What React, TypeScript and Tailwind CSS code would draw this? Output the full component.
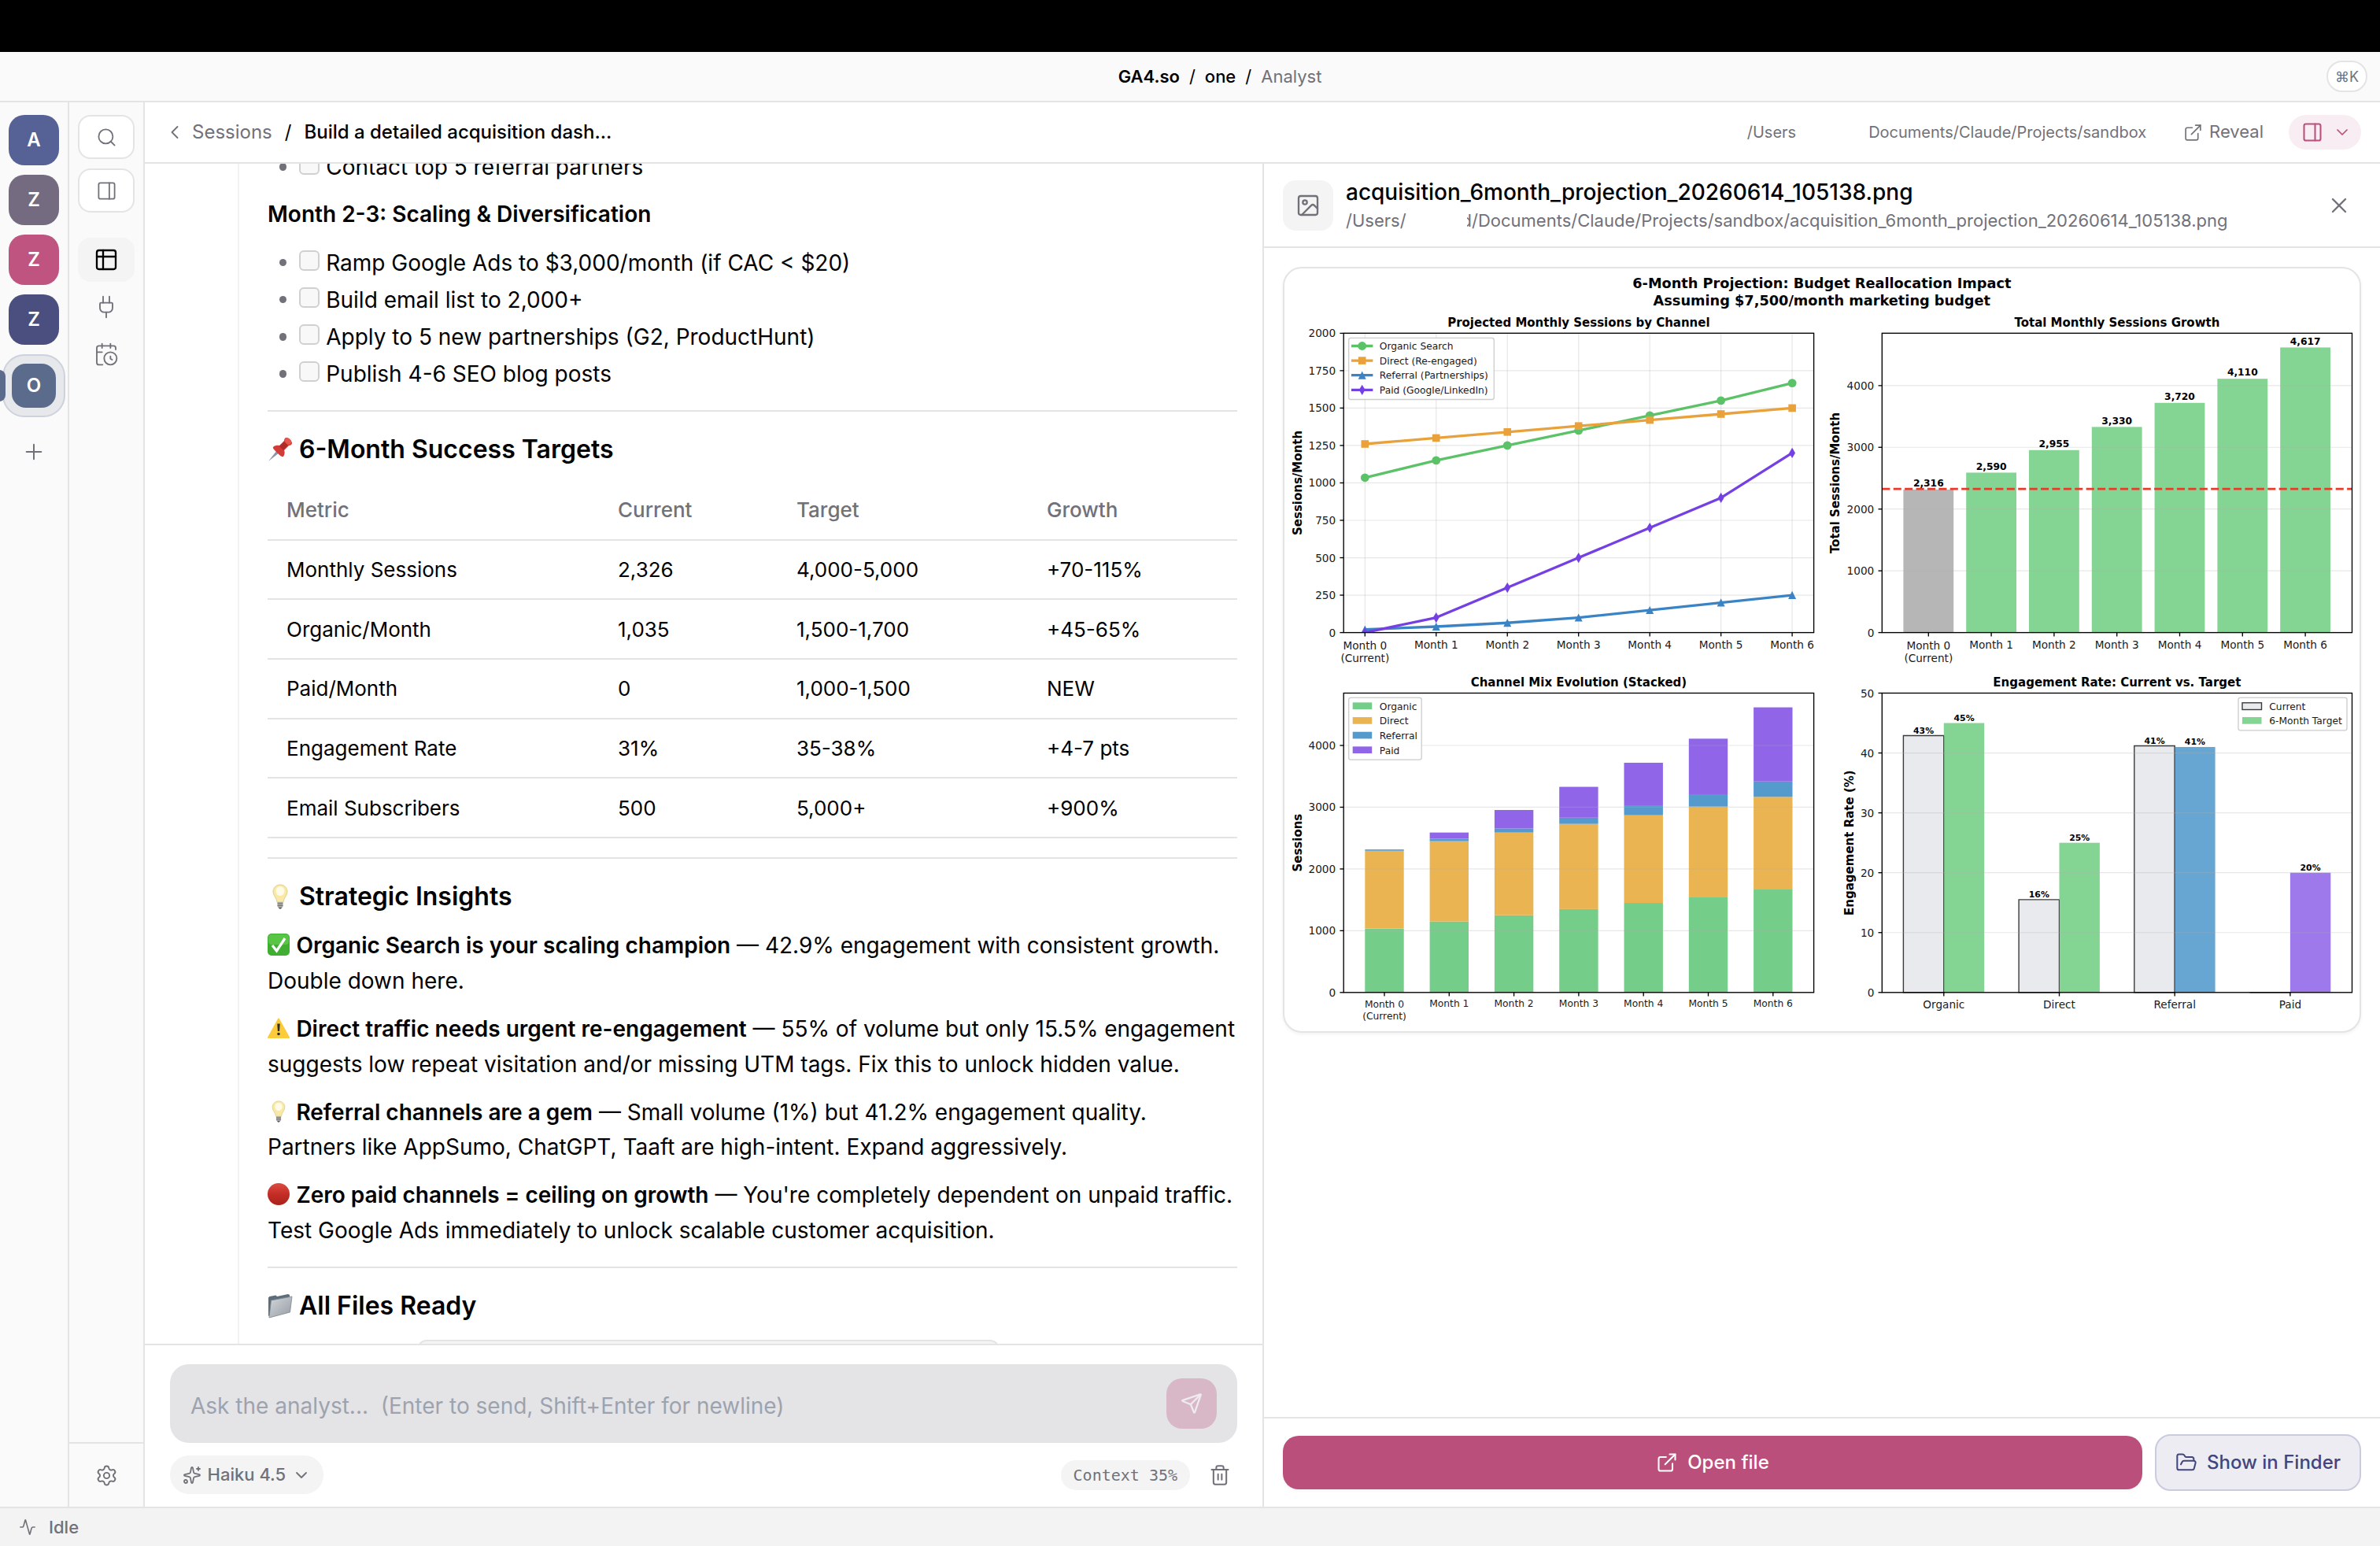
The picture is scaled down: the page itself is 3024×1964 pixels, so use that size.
import {
  Activity,
  CalendarClock,
  ChevronDown,
  ChevronLeft,
  ExternalLink,
  FolderOpen,
  Image as ImageIcon,
  PanelRight,
  Plug,
  Plus,
  Search,
  Send,
  Settings,
  Sparkles,
  Trash2,
  X,
} from 'lucide-react';
import type { ReactNode } from 'react';

const workspaces = [
  { letter: 'A', color: 'bg-[#566296]' },
  { letter: 'Z', color: 'bg-[#746b80]' },
  { letter: 'Z', color: 'bg-[#c05480]' },
  { letter: 'Z', color: 'bg-[#4a4f80]' },
];

const tasks = [
  'Ramp Google Ads to $3,000/month (if CAC < $20)',
  'Build email list to 2,000+',
  'Apply to 5 new partnerships (G2, ProductHunt)',
  'Publish 4-6 SEO blog posts',
];

const targets = [
  ['Monthly Sessions', '2,326', '4,000-5,000', '+70-115%'],
  ['Organic/Month', '1,035', '1,500-1,700', '+45-65%'],
  ['Paid/Month', '0', '1,000-1,500', 'NEW'],
  ['Engagement Rate', '31%', '35-38%', '+4-7 pts'],
  ['Email Subscribers', '500', '5,000+', '+900%'],
];

// ---------- emoji ----------

function PinEmoji() {
  return (
    <svg viewBox="0 0 32 32" className="size-4 shrink-0">
      <path d="M1 31 12 17l3 3z" fill="#8a97a8" />
      <path d="M7 13c3-3 7-2 8-2l6-6c0-2 1-4 3-4 3 0 7 4 7 7 0 2-2 3-4 3l-6 6c1 2 1 5-1 8-1 1-3 0-7-4s-7-7-6-8z" fill="#d23c36" />
      <path d="M15 12l6-6 5 5-6 6z" fill="#b02a28" />
      <ellipse cx="26" cy="5.500" rx="4.500" ry="3.500" transform="rotate(45 26 5.500)" fill="#e8554c" />
    </svg>
  );
}

function BulbEmoji({ className }: { className: string }) {
  return (
    <svg viewBox="0 0 32 32" className={className}>
      <path d="M16 1c-5.500 0-9 4-9 8.800 0 5 4.600 7.600 5 13.200h8c.4-5.600 5-8.200 5-13.200C25 5 21.500 1 16 1z" fill="#f8e9a6" stroke="#e3cf86" />
      <ellipse cx="16" cy="9" rx="5.500" ry="6" fill="#fffbe6" />
      <path d="M12.500 23h7v5c0 1.500-1.500 3-3.500 3s-3.500-1.500-3.500-3z" fill="#a9a9a9" />
      <path d="M12.500 25h7M12.500 27.500h7" stroke="#77756f" />
      <path d="M14 30h4l-1 1.500h-2z" fill="#444" />
    </svg>
  );
}

function CheckEmoji() {
  return (
    <svg viewBox="0 0 28 28" className="mr-[4.2px] inline-block size-3.5 align-[-1.5px]">
      <rect width="28" height="28" rx="5" fill="#3fae32" />
      <rect x="1" y="1" width="26" height="13" rx="4" fill="#58c544" />
      <path d="m6 15 5.500 7L22 6" fill="none" stroke="#fff" strokeWidth="3.200" />
    </svg>
  );
}

function WarningEmoji() {
  return (
    <svg viewBox="0 0 28 28" className="mr-[4.2px] inline-block size-3.5 align-[-1.5px]">
      <path d="M14 2.500 27 26H1z" fill="#fccb3a" stroke="#fccb3a" strokeWidth="2" strokeLinejoin="round" />
      <path d="M12.300 8.500h3.400l-.6 9.500h-2.200z" fill="#2c2c2c" />
      <circle cx="14" cy="21.500" r="1.800" fill="#2c2c2c" />
    </svg>
  );
}

function RedCircleEmoji() {
  return (
    <svg viewBox="0 0 28 28" className="mr-[4.2px] inline-block size-3.5 align-[-1.5px]">
      <defs>
        <linearGradient id="red" x1="0" y1="0" x2="0" y2="1">
          <stop offset="0" stopColor="#dc4c43" />
          <stop offset="0.500" stopColor="#c42d25" />
          <stop offset="1" stopColor="#a8221c" />
        </linearGradient>
      </defs>
      <circle cx="14" cy="14" r="14" fill="url(#red)" />
    </svg>
  );
}

function FolderEmoji() {
  return (
    <svg viewBox="0 0 32 32" className="size-4 shrink-0">
      <defs>
        <linearGradient id="folder" x1="0" y1="0" x2="1" y2="1">
          <stop offset="0" stopColor="#d3d7dc" />
          <stop offset="1" stopColor="#969ca3" />
        </linearGradient>
      </defs>
      <path d="M1 5.500 2.500 4l8-1.500 1.500 1.500 14-3 2 1v3L3 28l-2 1z" fill="#5d6d7a" />
      <path d="M4.500 9 31 4l-2.500 20L2 31z" fill="url(#folder)" stroke="#7c858e" strokeWidth=".8" />
    </svg>
  );
}

// ---------- charts ----------

// one typographic point of the figure in drawing units
const PT = 1.364;
const MONTHS = [0, 1, 2, 3, 4, 5, 6];

const series = {
  organic: [1035, 1150, 1250, 1350, 1450, 1550, 1667],
  direct: [1260, 1300, 1340, 1380, 1420, 1460, 1500],
  referral: [21, 40, 65, 100, 150, 200, 250],
  paid: [0, 100, 300, 500, 700, 900, 1200],
};

type TextProps = {
  x: number;
  y: number;
  size: number;
  bold?: boolean;
  anchor?: 'start' | 'middle' | 'end';
  vertical?: boolean;
  children: ReactNode;
};

function Label({ x, y, size, bold, anchor = 'middle', vertical, children }: TextProps) {
  return (
    <text
      x={x}
      y={y}
      fontSize={size * PT}
      fontWeight={bold ? 700 : 400}
      textAnchor={anchor}
      fill={bold ? '#000' : '#1a1a1a'}
      transform={vertical ? `rotate(-90 ${x} ${y})` : undefined}
    >
      {children}
    </text>
  );
}

type FrameProps = {
  left: number;
  right: number;
  top: number;
  max: number;
  ticks: number[];
  title: string;
  yLabel: string;
  yLabelX: number;
};

const HEIGHT = 380.3;

function yOf(top: number, max: number, v: number) {
  return top + HEIGHT - (v / max) * HEIGHT;
}

function Grid({ left, right, top, max, ticks }: Pick<FrameProps, 'left' | 'right' | 'top' | 'max' | 'ticks'>) {
  return (
    <>
      {ticks.map((t) => (
        <line key={t} x1={left} x2={right} y1={yOf(top, max, t)} y2={yOf(top, max, t)} stroke="#b0b0b0" strokeOpacity={0.3} strokeWidth={1.2} />
      ))}
    </>
  );
}

function Frame({ left, right, top, max, ticks, title, yLabel, yLabelX }: FrameProps) {
  return (
    <>
      <rect x={left} y={top} width={right - left} height={HEIGHT} fill="none" stroke="#000" strokeWidth={1.35} />
      {ticks.map((t) => {
        const y = yOf(top, max, t);
        return (
          <g key={t}>
            <line x1={left - 4.8} x2={left} y1={y} y2={y} stroke="#000" strokeWidth={1.35} />
            <Label x={left - 10} y={y + 5} size={10} anchor="end">
              {t}
            </Label>
          </g>
        );
      })}
      <Label x={(left + right) / 2} y={top - 8.4} size={11} bold>
        {title}
      </Label>
      <Label x={yLabelX} y={top + HEIGHT / 2} size={11} bold vertical>
        {yLabel}
      </Label>
    </>
  );
}

function MonthAxis({ first, step, y, size }: { first: number; step: number; y: number; size: number }) {
  return (
    <>
      {MONTHS.map((m) => {
        const x = first + m * step;
        return (
          <g key={m}>
            <line x1={x} x2={x} y1={y} y2={y + 4.8} stroke="#000" strokeWidth={1.35} />
            <Label x={x} y={y + (m ? size * 2 : size * 2 + 1.3)} size={size}>
              Month {m}
            </Label>
            {m === 0 && (
              <Label x={x} y={y + (size === 10 ? 37.8 : 34.6)} size={size}>
                (Current)
              </Label>
            )}
          </g>
        );
      })}
    </>
  );
}

function Marker({ kind, x, y, color }: { kind: string; x: number; y: number; color: string }) {
  if (kind === 'circle') return <circle cx={x} cy={y} r={5.4} fill={color} />;
  if (kind === 'square') return <rect x={x - 4.8} y={y - 4.8} width={9.6} height={9.6} fill={color} />;
  if (kind === 'triangle') return <path d={`M${x} ${y - 5.2}l5 10.200h-10z`} fill={color} />;
  return <path d={`M${x} ${y - 6.6}l3.900 6.600-3.900 6.600-3.900-6.600z`} fill={color} />;
}

const lines = [
  { name: 'Organic Search', values: series.organic, color: '#5bc267', kind: 'circle' },
  { name: 'Direct (Re-engaged)', values: series.direct, color: '#e9a23b', kind: 'square' },
  { name: 'Referral (Partnerships)', values: series.referral, color: '#3a84c5', kind: 'triangle' },
  { name: 'Paid (Google/LinkedIn)', values: series.paid, color: '#7540e3', kind: 'diamond' },
];

function SessionsByChannel() {
  const left = 75.2;
  const right = 672.6;
  const top = 82.3;
  const ticks = [0, 250, 500, 750, 1000, 1250, 1500, 1750, 2000];
  const xOf = (m: number) => 102.3 + m * 90.47;
  return (
    <g>
      <Grid left={left} right={right} top={top} max={2000} ticks={ticks} />
      {MONTHS.map((m) => (
        <line key={m} x1={xOf(m)} x2={xOf(m)} y1={top} y2={top + HEIGHT} stroke="#b0b0b0" strokeOpacity={0.3} strokeWidth={1.2} />
      ))}
      <clipPath id="plot">
        <rect x={left} y={top} width={right - left} height={HEIGHT} />
      </clipPath>
      <g clipPath="url(#plot)">
        {lines.map((l) => (
          <g key={l.name}>
            <polyline
              points={l.values.map((v, m) => `${xOf(m)},${yOf(top, 2000, v)}`).join(' ')}
              fill="none"
              stroke={l.color}
              strokeWidth={3.3}
              strokeLinejoin="round"
            />
            {l.values.map((v, m) => (
              <Marker key={m} kind={l.kind} x={xOf(m)} y={yOf(top, 2000, v)} color={l.color} />
            ))}
          </g>
        ))}
      </g>
      <Frame left={left} right={right} top={top} max={2000} ticks={ticks} title="Projected Monthly Sessions by Channel" yLabel="Sessions/Month" yLabelX={22} />
      <MonthAxis first={102.3} step={90.47} y={462.6} size={10} />
      <rect x={81.7} y={88.4} width={184.6} height={78.1} rx={2.5} fill="#fff" fillOpacity={0.8} stroke="#ccc" strokeWidth={1.3} />
      {lines.map((l, i) => {
        const y = 98.5 + i * 18.6;
        return (
          <g key={l.name}>
            <line x1={85} x2={112.4} y1={y} y2={y} stroke={l.color} strokeWidth={3.3} />
            <Marker kind={l.kind} x={98.7} y={y} color={l.color} />
            <Label x={120.8} y={y + 4.7} size={9} anchor="start">
              {l.name}
            </Label>
          </g>
        );
      })}
    </g>
  );
}

const totals = [2316, 2590, 2955, 3330, 3720, 4110, 4617];

function TotalGrowth() {
  const left = 759.3;
  const right = 1356.5;
  const top = 82.3;
  const max = 4847.85;
  const ticks = [0, 1000, 2000, 3000, 4000];
  const xOf = (m: number) => 818.3 + m * 79.8;
  return (
    <g>
      {totals.map((v, m) => (
        <rect key={m} x={xOf(m) - 31.9} y={yOf(top, max, v)} width={63.8} height={462.6 - yOf(top, max, v)} fill={m ? '#84d494' : '#b6b6b6'} />
      ))}
      <Grid left={left} right={right} top={top} max={max} ticks={ticks} />
      <line x1={left} x2={right} y1={yOf(top, max, 2326)} y2={yOf(top, max, 2326)} stroke="#ea3829" strokeWidth={2.7} strokeDasharray="10.06 4.350" />
      <Frame left={left} right={right} top={top} max={max} ticks={ticks} title="Total Monthly Sessions Growth" yLabel="Total Sessions/Month" yLabelX={705.5} />
      {totals.map((v, m) => (
        <Label key={m} x={xOf(m)} y={yOf(top, max, v) - 3.8} size={9} bold>
          {v.toLocaleString('en-US')}
        </Label>
      ))}
      <MonthAxis first={818.3} step={79.8} y={462.6} size={10} />
    </g>
  );
}

const stack = [
  { name: 'Organic', values: series.organic, color: '#74cd88' },
  { name: 'Direct', values: series.direct, color: '#ebb452' },
  { name: 'Referral', values: series.referral, color: '#549acd' },
  { name: 'Paid', values: series.paid, color: '#9065e8' },
];

function ChannelMix() {
  const left = 75.2;
  const right = 672.6;
  const top = 539.5;
  const max = 4847.85;
  const ticks = [0, 1000, 2000, 3000, 4000];
  const first = 127;
  const step = 82.3;
  return (
    <g>
      {MONTHS.map((m) => {
        let base = 0;
        return stack.map((s) => {
          const from = base;
          base += s.values[m];
          return (
            <rect
              key={s.name + m}
              x={first + m * step - 24.7}
              y={yOf(top, max, base)}
              width={49.4}
              height={yOf(top, max, from) - yOf(top, max, base)}
              fill={s.color}
            />
          );
        });
      })}
      <Grid left={left} right={right} top={top} max={max} ticks={ticks} />
      <Frame left={left} right={right} top={top} max={max} ticks={ticks} title="Channel Mix Evolution (Stacked)" yLabel="Sessions" yLabelX={22} />
      <MonthAxis first={first} step={step} y={919.8} size={9} />
      <rect x={81.7} y={545.3} width={92.5} height={78.8} rx={2.5} fill="#fff" fillOpacity={0.8} stroke="#ccc" strokeWidth={1.3} />
      {stack.map((s, i) => (
        <g key={s.name}>
          <rect x={86.7} y={551.4 + i * 18.65} width={24.5} height={8.7} fill={s.color} />
          <Label x={120.8} y={560.6 + i * 18.65} size={9} anchor="start">
            {s.name}
          </Label>
        </g>
      ))}
    </g>
  );
}

const engagement = [
  { name: 'Organic', current: 42.9, target: 45, color: '#84d494' },
  { name: 'Direct', current: 15.5, target: 25, color: '#84d494' },
  { name: 'Referral', current: 41.2, target: 41, color: '#67a6d3' },
  { name: 'Paid', current: 0, target: 20, color: '#9e79eb' },
];

function EngagementRate() {
  const left = 759.3;
  const right = 1356.5;
  const top = 539.5;
  const bottom = 919.8;
  const ticks = [0, 10, 20, 30, 40, 50];
  const w = 51.4;
  return (
    <g>
      {engagement.map((e, i) => {
        const x = 837.8 + i * 146.7;
        const yc = yOf(top, 50, e.current);
        const yt = yOf(top, 50, e.target);
        return (
          <g key={e.name}>
            <path d={`M${x - w} ${bottom}V${yc}H${x}V${bottom}z`} fill="#e8eaed" stroke="#3a3a3c" strokeWidth={1.4} />
            <rect x={x} y={yt} width={w} height={bottom - yt} fill={e.color} />
            {e.current > 0 && <line x1={x} x2={x} y1={Math.max(yc, yt)} y2={bottom} stroke="#3a3a3c" strokeOpacity={0.7} />}
          </g>
        );
      })}
      <Grid left={left} right={right} top={top} max={50} ticks={ticks} />
      <Frame left={left} right={right} top={top} max={50} ticks={ticks} title="Engagement Rate: Current vs. Target" yLabel="Engagement Rate (%)" yLabelX={723} />
      {engagement.map((e, i) => {
        const x = 837.8 + i * 146.7;
        return (
          <g key={e.name}>
            <line x1={x} x2={x} y1={bottom} y2={bottom + 4.8} stroke="#000" strokeWidth={1.35} />
            <Label x={x} y={bottom + 20.4} size={10}>
              {e.name}
            </Label>
            {e.current > 0 && (
              <Label x={x - w / 2} y={yOf(top, 50, e.current) - 2.6} size={8} bold>
                {Math.round(e.current)}%
              </Label>
            )}
            <Label x={x + w / 2} y={yOf(top, 50, e.target) - 2.6} size={8} bold>
              {e.target}%
            </Label>
          </g>
        );
      })}
      <rect x={1212} y={545.3} width={138} height={41.5} rx={2.5} fill="#fff" fillOpacity={0.8} stroke="#ccc" strokeWidth={1.3} />
      <rect x={1217} y={551.8} width={24.5} height={8.7} fill="#e8eaed" stroke="#3a3a3c" strokeWidth={1.4} />
      <rect x={1217} y={570} width={24.5} height={8.7} fill="#84d494" />
      <Label x={1251.3} y={560.6} size={9} anchor="start">
        Current
      </Label>
      <Label x={1251.3} y={579.3} size={9} anchor="start">
        6-Month Target
      </Label>
    </g>
  );
}

function ProjectionFigure() {
  return (
    <svg viewBox="0 0 1366 969" className="block w-full font-['DejaVu_Sans',sans-serif]">
      <Label x={682.8} y={25.2} size={13} bold>
        6-Month Projection: Budget Reallocation Impact
      </Label>
      <Label x={682.8} y={46.5} size={13} bold>
        Assuming $7,500/month marketing budget
      </Label>
      <SessionsByChannel />
      <TotalGrowth />
      <ChannelMix />
      <EngagementRate />
    </svg>
  );
}

// ---------- app shell ----------

function WorkspaceRail() {
  return (
    <aside className="flex w-11 shrink-0 flex-col items-center gap-1.5 border-r border-[#e4e4e5] bg-[#fafafa] pt-2">
      {workspaces.map((w, i) => (
        <div key={i} className={`flex size-8 items-center justify-center rounded-[10px] text-xs font-semibold text-white ${w.color}`}>
          {w.letter}
        </div>
      ))}
      <div className="relative flex size-10 items-center justify-center rounded-[14px] border border-[#cdd2dc] bg-[#e6e8ec]">
        <span className="absolute top-[9px] -left-[3px] h-5 w-1 rounded-r-sm bg-[#5b6b8c]" />
        <div className="flex size-7 items-center justify-center rounded-[9px] bg-[#5b6b8c] text-xs font-semibold text-white">O</div>
      </div>
      <button className="flex size-8 items-center justify-center text-[#71717a]">
        <Plus size={16} strokeWidth={1.5} />
      </button>
    </aside>
  );
}

function TableIcon() {
  return (
    <svg viewBox="0 0 24 24" className="size-4" fill="none" stroke="currentColor" strokeWidth="1.750" strokeLinecap="round" strokeLinejoin="round">
      <rect x="3" y="3" width="18" height="18" rx="2" />
      <path d="M3 9h18M9 3v18" />
    </svg>
  );
}

function NavRail() {
  return (
    <aside className="flex w-12 shrink-0 flex-col items-center border-r border-[#e4e4e5] bg-[#fafafa] pt-2 text-[#71717a]">
      <div className="flex flex-col gap-1.5">
        <button className="flex h-7 w-9 items-center justify-center rounded-lg border border-[#e4e4e5] bg-white">
          <Search size={13.5} strokeWidth={1.6} />
        </button>
        <button className="flex h-7 w-9 items-center justify-center rounded-lg border border-[#e4e4e5] bg-white">
          <PanelRight size={13.5} strokeWidth={1.6} />
        </button>
      </div>
      <nav className="mt-4 flex flex-1 flex-col gap-0.5">
        <button className="flex h-7 w-9 items-center justify-center rounded-lg bg-[#f4f4f4] text-black">
          <TableIcon />
        </button>
        <button className="flex h-7 w-9 items-center justify-center">
          <Plug size={16} strokeWidth={1.4} />
        </button>
        <button className="flex h-7 w-9 items-center justify-center">
          <CalendarClock size={16} strokeWidth={1.4} />
        </button>
      </nav>
      <div className="flex h-[41px] w-full items-center justify-center border-t border-[#e4e4e5]">
        <Settings size={14.5} strokeWidth={1.6} />
      </div>
    </aside>
  );
}

function Insight({ icon, title, children }: { icon: ReactNode; title: string; children: ReactNode }) {
  return (
    <p className="mt-2 text-sm leading-[1.6]">
      {icon}
      <strong className="font-semibold">{title}</strong> — {children}
    </p>
  );
}

function Task({ children }: { children: ReactNode }) {
  return (
    <li className="flex h-[22.4px] items-center pl-[7.3px] text-sm">
      <span className="size-[4.8px] rounded-full bg-[#71717a]" />
      <span className="mr-1 mb-[3px] ml-2 size-[13px] rounded-[3px] border border-[#d0d0d0] bg-[#f8f8f8]" />
      {children}
    </li>
  );
}

function Transcript() {
  return (
    <div className="min-h-0 flex-1 overflow-hidden pr-4 pl-[59px]">
      <div className="-mt-[9.2px] h-[900px] border-l border-[#f2f2f3] pl-[18px]">
        <ul>
          <Task>Contact top 5 referral partners</Task>
        </ul>
        <h4 className="mt-2 text-sm leading-[1.6] font-semibold">Month 2-3: Scaling &amp; Diversification</h4>
        <ul className="mt-2 flex flex-col gap-[1.15px]">
          {tasks.map((t) => (
            <Task key={t}>{t}</Task>
          ))}
        </ul>
        <hr className="my-3 border-[#e4e4e5]" />
        <h3 className="flex h-6 items-center gap-1 text-base font-semibold">
          <PinEmoji />
          6-Month Success Targets
        </h3>
        <table className="mt-[7.500px] w-full table-fixed border-collapse text-left text-[13px]">
          <colgroup>
            <col className="w-[210.5px]" />
            <col className="w-[113.5px]" />
            <col className="w-[159px]" />
            <col className="w-[133px]" />
          </colgroup>
          <thead>
            <tr className="h-[37.8px] border-b border-[#e4e4e7] text-[#71717a]">
              {['Metric', 'Current', 'Target', 'Growth'].map((h) => (
                <th key={h} className="px-3 font-medium">
                  {h}
                </th>
              ))}
            </tr>
          </thead>
          <tbody>
            {targets.map((row) => (
              <tr key={row[0]} className="h-[37.8px] border-b border-[#e4e4e7]">
                {row.map((cell) => (
                  <td key={cell} className="px-3">
                    {cell}
                  </td>
                ))}
              </tr>
            ))}
          </tbody>
        </table>
        <hr className="mt-[12.3px] mb-3 border-[#e4e4e5]" />
        <h3 className="flex h-6 items-center gap-1 text-base font-semibold">
          <BulbEmoji className="size-4 shrink-0" />
          Strategic Insights
        </h3>
        <Insight icon={<CheckEmoji />} title="Organic Search is your scaling champion">
          42.9% engagement with consistent growth.
          <br />
          Double down here.
        </Insight>
        <Insight icon={<WarningEmoji />} title="Direct traffic needs urgent re-engagement">
          55% of volume but only 15.5% engagement
          <br />
          suggests low repeat visitation and/or missing UTM tags. Fix this to unlock hidden value.
        </Insight>
        <Insight icon={<BulbEmoji className="mr-[4.2px] inline-block size-3.5 align-[-1.5px]" />} title="Referral channels are a gem">
          Small volume (1%) but 41.2% engagement quality.
          <br />
          Partners like AppSumo, ChatGPT, Taaft are high-intent. Expand aggressively.
        </Insight>
        <Insight icon={<RedCircleEmoji />} title="Zero paid channels = ceiling on growth">
          You're completely dependent on unpaid traffic.
          <br />
          Test Google Ads immediately to unlock scalable customer acquisition.
        </Insight>
        <hr className="mt-[11.6px] mb-3 border-[#e4e4e5]" />
        <h3 className="flex h-6 items-center gap-1 text-base font-semibold">
          <FolderEmoji />
          All Files Ready
        </h3>
        <div className="mt-[9.500px] ml-[95px] h-6 w-[370px] rounded-md border border-[#e4e4e7] bg-[#f4f4f5]" />
      </div>
    </div>
  );
}

function Composer() {
  return (
    <div className="shrink-0 border-t border-[#e4e4e5] px-4 pt-3 pb-2">
      <div className="flex h-[50px] items-center justify-between rounded-xl bg-[#e4e4e6] pr-[13px] pl-[13px]">
        <span className="pt-[3px] text-sm whitespace-pre text-[#9ca3af]">Ask the analyst...  (Enter to send, Shift+Enter for newline)</span>
        <button className="flex size-8 items-center justify-center rounded-[10px] bg-[#d8b8c7] text-[#eeeaed]">
          <Send size={14} strokeWidth={2} />
        </button>
      </div>
      <div className="mt-2 flex h-[24.5px] items-center text-[#71717a]">
        <button className="flex h-full items-center gap-[3.8px] rounded-xl bg-[#f4f4f4] px-2 text-[11px] font-medium">
          <Sparkles size={12} strokeWidth={1.8} />
          Haiku 4.5
          <ChevronDown size={12} strokeWidth={1.8} />
        </button>
        <span className="mr-2 ml-auto flex h-[19px] items-center rounded-full bg-[#f4f4f4] px-2 font-['DejaVu_Sans_Mono',monospace] text-[10px]">
          Context 35%
        </span>
        <button className="flex w-[22px] items-center justify-center">
          <Trash2 size={14} strokeWidth={1.75} />
        </button>
      </div>
    </div>
  );
}

function FilePreview() {
  return (
    <section className="flex min-w-0 flex-1 flex-col">
      <header className="flex h-[53.5px] shrink-0 items-center border-b border-[#e4e4e5] px-3">
        <div className="flex size-8 shrink-0 items-center justify-center rounded-lg bg-[#f4f4f4] text-[#71717a]">
          <ImageIcon size={16} strokeWidth={1.75} />
        </div>
        <div className="ml-2 min-w-0 flex-1 pt-[1.500px]">
          <div className="text-sm leading-[18px] font-medium">acquisition_6month_projection_20260614_105138.png</div>
          <div className="flex text-[11px] leading-[18px] text-[#71717a]">
            <span className="w-[77px]">/Users/</span>
            {/* only the tail of the masked user name stays visible */}
            <span className="flex w-[3px] justify-end overflow-hidden">d</span>
            <span>/Documents/Claude/Projects/sandbox/acquisition_6month_projection_20260614_105138.png</span>
          </div>
        </div>
        <button className="flex size-7 items-center justify-center text-[#71717a]">
          <X size={16} strokeWidth={1.75} />
        </button>
      </header>
      <div className="flex-1 p-3">
        <div className="overflow-hidden rounded-xl border border-[#e4e4e5] bg-white shadow-xs">
          <ProjectionFigure />
        </div>
      </div>
      <footer className="flex items-center gap-2 border-t border-[#e4e4e5] px-3 py-2.5 text-xs font-medium">
        <button className="flex h-[34px] flex-1 items-center justify-center gap-1.5 rounded-[10px] bg-[#bb4f7b] text-white shadow-xs">
          <ExternalLink size={14} strokeWidth={1.75} />
          Open file
        </button>
        <button className="flex h-9 w-[131px] items-center justify-center gap-1.5 rounded-[10px] border border-[#c9cbde] bg-[#edecf3] text-[#40467d]">
          <FolderOpen size={14} strokeWidth={1.75} />
          Show in Finder
        </button>
      </footer>
    </section>
  );
}

export default function App() {
  return (
    <div className="flex h-[982px] w-[1512px] flex-col overflow-hidden bg-white font-['Inter',sans-serif] text-black [zoom:2]">
      <div className="h-[33px] shrink-0 bg-black" />
      <header className="flex h-8 shrink-0 items-center border-b border-[#e4e4e5] bg-[#fafafa] text-[11px]">
        <div className="w-[84px]" />
        <div className="flex flex-1 justify-center gap-1.5 pr-3">
          <span className="font-semibold">GA4.so</span>
          <span>/</span>
          <span className="font-medium">one</span>
          <span>/</span>
          <span className="text-[#71717a]">Analyst</span>
        </div>
        <div className="mr-2 flex h-5 w-[26px] items-center justify-center rounded-full border border-[#e4e4e5] bg-white text-[9px] text-[#71717a]">
          ⌘K
        </div>
      </header>

      <div className="flex min-h-0 flex-1">
        <WorkspaceRail />
        <NavRail />
        <main className="flex min-w-0 flex-1 flex-col">
          <div className="flex h-[39px] shrink-0 items-center border-b border-[#e4e4e5] pr-3 pl-3 text-xs">
            <ChevronLeft size={14} strokeWidth={1.6} className="text-[#71717a]" />
            <span className="ml-1 text-[#71717a]">Sessions</span>
            <span className="mx-2">/</span>
            <span className="font-medium">Build a detailed acquisition dash...</span>
            <div className="ml-auto flex items-center text-[11px] text-[#71717a]">
              <span className="text-[10px]">/Users</span>
              <span className="ml-[46px] text-[10px]">Documents/Claude/Projects/sandbox</span>
              <ExternalLink size={12.5} strokeWidth={1.6} className="ml-[23.5px]" />
              <span className="ml-1">Reveal</span>
              <button className="ml-4 flex h-[22px] w-[46px] items-center justify-center gap-1.5 rounded-full bg-[#f8edf2] text-[#bb4f7b]">
                <PanelRight size={14} strokeWidth={1.75} className="ml-0.5" />
                <ChevronDown size={12} strokeWidth={1.75} />
              </button>
            </div>
          </div>
          <div className="flex min-h-0 flex-1">
            <section className="flex w-[711px] shrink-0 flex-col border-r border-[#e4e4e5]">
              <Transcript />
              <Composer />
            </section>
            <FilePreview />
          </div>
        </main>
      </div>

      <footer className="flex h-[25px] shrink-0 items-center gap-2 border-t border-[#e4e4e5] bg-[#f3f3f3] pl-3 text-[11px] font-medium text-[#71717a]">
        <Activity size={11} strokeWidth={1.75} />
        Idle
      </footer>
    </div>
  );
}
